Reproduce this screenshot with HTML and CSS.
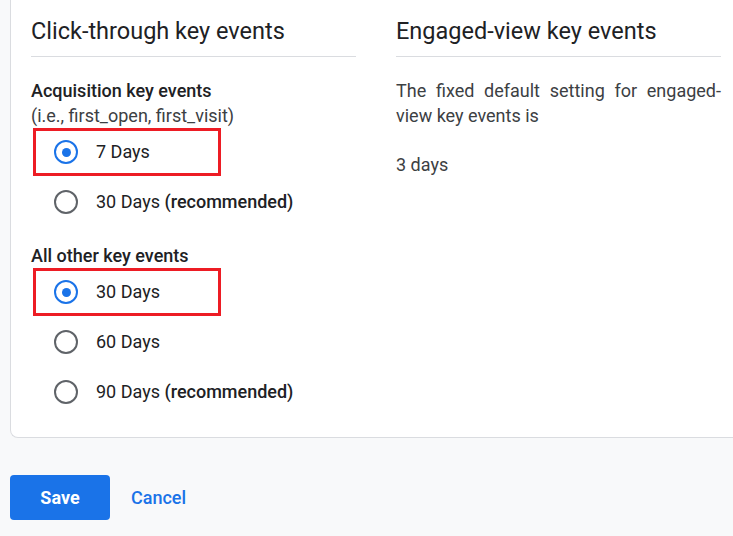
FILE: index.html
```html
<!DOCTYPE html>
<html lang="en">
<head>
<meta charset="utf-8">
<title>Attribution windows</title>
<link rel="stylesheet" href="styles.css">
</head>
<body>
<div class="card">
  <div class="cols">
    <section class="col">
      <h2 class="col-title">Click-through key events</h2>
      <div class="group">
        <div class="group-label">Acquisition key events</div>
        <div class="group-sub">(i.e., first_open, first_visit)</div>
        <div class="options">
          <label class="option highlight"><span class="radio checked"></span><span class="opt-text">7 Days</span></label>
          <label class="option"><span class="radio"></span><span class="opt-text">30 Days <b>(recommended)</b></span></label>
        </div>
      </div>
      <div class="group group-2">
        <div class="group-label">All other key events</div>
        <div class="options">
          <label class="option highlight"><span class="radio checked"></span><span class="opt-text">30 Days</span></label>
          <label class="option"><span class="radio"></span><span class="opt-text">60 Days</span></label>
          <label class="option"><span class="radio"></span><span class="opt-text">90 Days <b>(recommended)</b></span></label>
        </div>
      </div>
    </section>
    <section class="col">
      <h2 class="col-title">Engaged-view key events</h2>
      <p class="desc">The fixed default setting for engaged-view key events is</p>
      <p class="value">3 days</p>
    </section>
  </div>
</div>
<div class="actions">
  <button class="btn-save">Save</button>
  <button class="btn-cancel">Cancel</button>
</div>
</body>
</html>
```

FILE: styles.css
```css
html, body {
  margin: 0;
  padding: 0;
}
body {
  background: #f8f9fa;
  font-family: Roboto, "Liberation Sans", Arial, sans-serif;
  color: #3c4043;
  overflow: hidden;
  width: 733px;
  height: 536px;
}
.card {
  margin-left: 10px;
  margin-right: -40px;
  background: #fff;
  border-left: 1px solid #dadce0;
  border-bottom: 1px solid #dadce0;
  border-bottom-left-radius: 8px;
  padding: 17px 0 21px 20px;
}
.cols {
  display: flex;
  gap: 40px;
}
.col {
  width: 325px;
  flex: none;
}
.col-title {
  margin: 0;
  font-size: 23.5px;
  line-height: 28px;
  font-weight: 400;
  color: #202124;
  padding-bottom: 11px;
  border-bottom: 1px solid #dadce0;
}
.group {
  margin-top: 22px;
}
.group-2 {
  margin-top: 18px;
}
.group-label {
  font-size: 18px;
  line-height: 24px;
  font-weight: 500;
  color: #202124;
}
.group-sub {
  font-size: 18px;
  line-height: 25px;
  color: #3c4043;
}
.options {
  margin-top: 0;
  margin-left: 2px;
  display: flex;
  flex-direction: column;
  gap: 2px;
}
.option {
  box-sizing: border-box;
  width: 188px;
  height: 48px;
  border: 3px solid transparent;
  display: flex;
  align-items: center;
  gap: 18px;
  padding-left: 18px;
  white-space: nowrap;
}
.option.highlight {
  border-color: #ed1c24;
}
.radio {
  box-sizing: border-box;
  flex: none;
  width: 24px;
  height: 24px;
  border-radius: 50%;
  border: 2px solid #5f6368;
  display: flex;
  align-items: center;
  justify-content: center;
}
.radio.checked {
  border: 2.5px solid #1a73e8;
}
.radio.checked::after {
  content: "";
  width: 9px;
  height: 9px;
  border-radius: 50%;
  background: #1a73e8;
}
.opt-text {
  font-size: 18px;
  line-height: 24px;
  color: #202124;
}
.opt-text b {
  font-weight: 500;
}
.desc {
  margin: 21px 0 0 0;
  font-size: 18px;
  line-height: 25px;
  text-align: justify;
  color: #3c4043;
}
.value {
  margin: 25px 0 0;
  font-size: 18px;
  line-height: 24px;
  color: #3c4043;
}
.actions {
  margin: 37px 0 0 10px;
  display: flex;
  align-items: center;
  gap: 21px;
}
.btn-save {
  width: 100px;
  height: 45px;
  border: none;
  border-radius: 4px;
  background: #1a73e8;
  color: #fff;
  font-family: Roboto, "Liberation Sans", Arial, sans-serif;
  font-size: 18px;
  font-weight: 700;
  padding: 0;
}
.btn-cancel {
  border: none;
  background: none;
  padding: 0;
  color: #1a73e8;
  font-family: Roboto, "Liberation Sans", Arial, sans-serif;
  font-size: 18px;
  font-weight: 500;
}
```
